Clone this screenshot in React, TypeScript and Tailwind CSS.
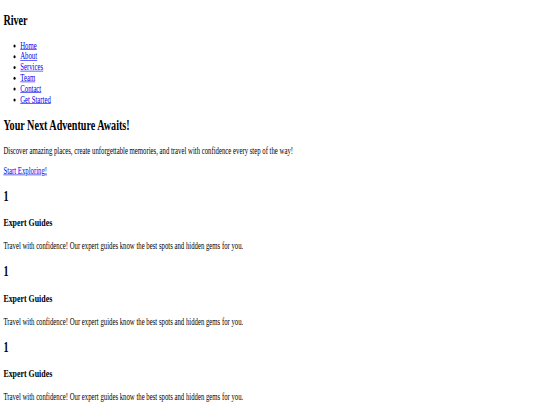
import React from "react";

const links = ["Home", "About", "Services", "Team", "Contact", "Get Started"];

function Feature() {
  return (
    <div>
      <h2 className="my-[19.92px] text-[24px] font-bold">1</h2>
      <h3 className="my-[18.72px] text-[18.72px] font-bold">Expert Guides</h3>
      <p className="my-4">Travel with confidence! Our expert guides know the best spots and hidden gems for you.</p>
    </div>
  );
}

export default function App() {
  return (
    <div className="h-[405px] w-[540px] overflow-hidden bg-white">
      {/* plain-HTML page, squeezed the way the reference was shot */}
      <div className="flow-root w-[1280px] origin-top-left scale-x-[0.421875] scale-y-[0.6] px-2 font-['Liberation_Serif',serif] text-[16px] leading-[normal] text-black">
        <header>
          <h2 className="my-[19.92px] text-[24px] font-bold">River</h2>
          <nav>
            <ul className="my-4 list-disc pl-10">
              {links.map((l) => (
                <li key={l}>
                  <a href="#" className="text-[#0000ee] underline">
                    {l}
                  </a>
                </li>
              ))}
            </ul>
          </nav>
        </header>
        <section>
          <h2 className="my-[19.92px] text-[24px] font-bold">Your Next Adventure Awaits!</h2>
          <p className="my-4">
            Discover amazing places, create unforgettable memories, and travel with confidence every step of the way!
          </p>
          <p className="my-4">
            <a href="#" className="text-[#0000ee] underline">
              Start Exploring!
            </a>
          </p>
        </section>
        <section>
          <Feature />
          <Feature />
          <Feature />
        </section>
      </div>
    </div>
  );
}
